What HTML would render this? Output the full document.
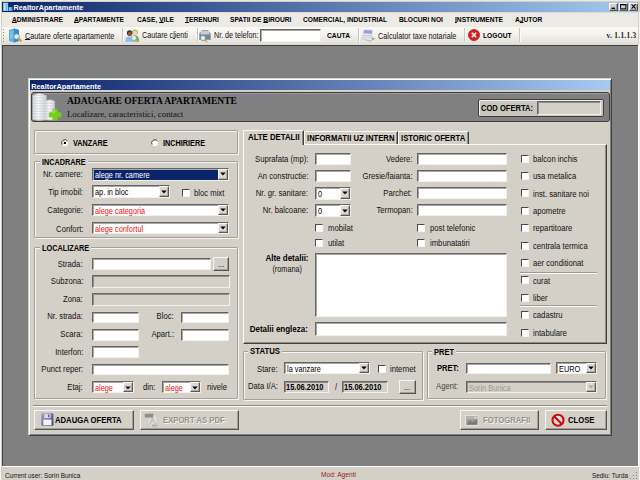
<!DOCTYPE html><html><head><meta charset="utf-8"><style>
html,body{margin:0;padding:0;width:640px;height:480px;overflow:hidden;background:#d4d0c8;}
.a{position:absolute;}
.t{position:absolute;white-space:nowrap;}
</style></head><body>
<div class="a" style="left:0px;top:0px;width:640px;height:480px;background:#d4d0c8;"></div>
<div class="a" style="left:0px;top:0px;width:640px;height:1px;background:#e9e7e2;"></div>
<div class="a" style="left:2px;top:2px;width:636px;height:10px;background:linear-gradient(90deg,#0a246a 0%,#a6caf0 100%);"></div>
<svg class="a" style="left:3px;top:2px" width="10" height="10"><rect x="0.1" y="0.7" width="5" height="8.2" fill="#93d2f2"/><rect x="1.2" y="1.5" width="0.8" height="7" fill="#c8ecfb"/><rect x="3.2" y="1.5" width="0.8" height="7" fill="#5fb2de"/><rect x="5.5" y="5" width="4" height="4" fill="#4b9fcf"/><rect x="6.2" y="5.6" width="1.5" height="3" fill="#8fcbe9"/></svg>
<div class="t" style="left:13.50px;top:3.92px;font:bold 7.30px/7.30px 'Liberation Sans', sans-serif;color:#fff;">RealtorApartamente</div>
<div class="a" style="left:609px;top:3px;width:9px;height:8px;background:#d4d0c8;border-top:1px solid #f6f5f2;border-left:1px solid #f6f5f2;border-right:1px solid #555452;border-bottom:1px solid #555452;box-sizing:border-box;box-shadow:inset -1px -1px 0 rgba(128,126,122,0.6);"></div>
<div class="a" style="left:619px;top:3px;width:9px;height:8px;background:#d4d0c8;border-top:1px solid #f6f5f2;border-left:1px solid #f6f5f2;border-right:1px solid #555452;border-bottom:1px solid #555452;box-sizing:border-box;box-shadow:inset -1px -1px 0 rgba(128,126,122,0.6);"></div>
<div class="a" style="left:629px;top:3px;width:9px;height:8px;background:#d4d0c8;border-top:1px solid #f6f5f2;border-left:1px solid #f6f5f2;border-right:1px solid #555452;border-bottom:1px solid #555452;box-sizing:border-box;box-shadow:inset -1px -1px 0 rgba(128,126,122,0.6);"></div>
<svg class="a" style="left:609px;top:3px" width="30" height="8"><rect x="2.5" y="4.6" width="3.5" height="1.4" fill="#000"/><rect x="11.6" y="1.4" width="5.2" height="4.4" fill="none" stroke="#000" stroke-width="0.9"/><rect x="11.2" y="1" width="6" height="1.3" fill="#000"/><path d="M22.6 1.4L26.6 5.6M26.6 1.4L22.6 5.6" stroke="#000" stroke-width="1.1"/></svg>
<div class="a" style="left:2px;top:12px;width:636px;height:14px;background:#eceae5;"></div>
<div class="a" style="left:2px;top:12px;width:636px;height:1px;background:#dedcd6;"></div>
<div class="t" style="left:11.70px;top:16.23px;font:bold 7.65px/7.65px 'Liberation Sans', sans-serif;color:#000;transform:scaleX(0.8696);transform-origin:left 50%;text-decoration-thickness:0.5px;text-underline-offset:0.4px;"><u>A</u>DMINISTRARE</div>
<div class="t" style="left:74.00px;top:16.23px;font:bold 7.65px/7.65px 'Liberation Sans', sans-serif;color:#000;transform:scaleX(0.8696);transform-origin:left 50%;text-decoration-thickness:0.5px;text-underline-offset:0.4px;"><u>A</u>PARTAMENTE</div>
<div class="t" style="left:136.50px;top:16.23px;font:bold 7.65px/7.65px 'Liberation Sans', sans-serif;color:#000;transform:scaleX(0.8696);transform-origin:left 50%;text-decoration-thickness:0.5px;text-underline-offset:0.4px;">CASE, <u>V</u>ILE</div>
<div class="t" style="left:185.00px;top:16.23px;font:bold 7.65px/7.65px 'Liberation Sans', sans-serif;color:#000;transform:scaleX(0.8696);transform-origin:left 50%;text-decoration-thickness:0.5px;text-underline-offset:0.4px;"><u>T</u>ERENURI</div>
<div class="t" style="left:229.80px;top:16.23px;font:bold 7.65px/7.65px 'Liberation Sans', sans-serif;color:#000;transform:scaleX(0.8696);transform-origin:left 50%;text-decoration-thickness:0.5px;text-underline-offset:0.4px;">SPATII DE <u>B</u>IROURI</div>
<div class="t" style="left:303.20px;top:16.23px;font:bold 7.65px/7.65px 'Liberation Sans', sans-serif;color:#000;transform:scaleX(0.8696);transform-origin:left 50%;text-decoration-thickness:0.5px;text-underline-offset:0.4px;">COMERCIAL, INDUSTRIAL</div>
<div class="t" style="left:399.30px;top:16.23px;font:bold 7.65px/7.65px 'Liberation Sans', sans-serif;color:#000;transform:scaleX(0.8696);transform-origin:left 50%;text-decoration-thickness:0.5px;text-underline-offset:0.4px;">BLOCURI NOI</div>
<div class="t" style="left:455.00px;top:16.23px;font:bold 7.65px/7.65px 'Liberation Sans', sans-serif;color:#000;transform:scaleX(0.8696);transform-origin:left 50%;text-decoration-thickness:0.5px;text-underline-offset:0.4px;"><u>I</u>NSTRUMENTE</div>
<div class="t" style="left:514.50px;top:16.23px;font:bold 7.65px/7.65px 'Liberation Sans', sans-serif;color:#000;transform:scaleX(0.8696);transform-origin:left 50%;text-decoration-thickness:0.5px;text-underline-offset:0.4px;">A<u>J</u>UTOR</div>
<div class="a" style="left:2px;top:26px;width:636px;height:19px;background:linear-gradient(180deg,#fbfaf8 0%,#f3f2ee 45%,#e6e3dc 85%,#dcd9d1 100%);"></div>
<div class="a" style="left:2px;top:26px;width:636px;height:1px;background:#ebe9e4;"></div>
<div class="a" style="left:2px;top:45px;width:636px;height:1px;background:#404040;"></div>
<div class="a" style="left:3px;top:29px;width:1px;height:1px;background:#8d8a84;"></div>
<div class="a" style="left:3px;top:32px;width:1px;height:1px;background:#8d8a84;"></div>
<div class="a" style="left:3px;top:35px;width:1px;height:1px;background:#8d8a84;"></div>
<div class="a" style="left:3px;top:38px;width:1px;height:1px;background:#8d8a84;"></div>
<div class="a" style="left:3px;top:41px;width:1px;height:1px;background:#8d8a84;"></div>
<div class="a" style="left:122px;top:28px;width:1px;height:14px;background:#c9c6bf;"></div>
<div class="a" style="left:123px;top:28px;width:1px;height:14px;background:#fbfaf8;"></div>
<div class="a" style="left:196.7px;top:28px;width:1.0px;height:14px;background:#c9c6bf;"></div>
<div class="a" style="left:197.7px;top:28px;width:1.0px;height:14px;background:#fbfaf8;"></div>
<div class="a" style="left:357.6px;top:28px;width:1.0px;height:14px;background:#c9c6bf;"></div>
<div class="a" style="left:358.6px;top:28px;width:1.0px;height:14px;background:#fbfaf8;"></div>
<div class="a" style="left:464px;top:28px;width:1px;height:14px;background:#c9c6bf;"></div>
<div class="a" style="left:465px;top:28px;width:1px;height:14px;background:#fbfaf8;"></div>
<div class="a" style="left:519px;top:28px;width:1px;height:14px;background:#c9c6bf;"></div>
<div class="a" style="left:520px;top:28px;width:1px;height:14px;background:#fbfaf8;"></div>
<svg class="a" style="left:8px;top:28px" width="15" height="15"><path d="M1 2L6 0.5L11 2V13L6 14.5L1 13Z" fill="#5fb0e0"/><path d="M6 0.5L11 2V13L6 14.5Z" fill="#2f8fcc"/><path d="M2 4H5M2 6H5M2 8H5M2 10H5" stroke="#b9e0f6" stroke-width="0.7"/><circle cx="8.5" cy="8.5" r="2.8" fill="#dff1fb" stroke="#6f8da0" stroke-width="0.9"/><path d="M10.5 10.5L13.5 13.5" stroke="#e39a2a" stroke-width="1.8"/></svg>
<div class="t" style="left:24.80px;top:31.61px;font:normal 8.37px/8.37px 'Liberation Sans', sans-serif;color:#111;transform:scaleX(0.8696);transform-origin:left 50%;text-decoration-thickness:0.5px;text-underline-offset:0.4px;"><u>C</u>autare oferte apartamente</div>
<svg class="a" style="left:125px;top:28px" width="15" height="15"><circle cx="10" cy="4.3" r="2.9" fill="#b9b46a"/><circle cx="10" cy="5" r="2.2" fill="#f0d2b4"/><path d="M6.8 13.5C6.8 9 8 7.6 10.2 7.6S14 9 14 13.5Z" fill="#6fae4a"/><circle cx="4.6" cy="5" r="2.7" fill="#2c2c2c"/><circle cx="4.8" cy="5.8" r="2.2" fill="#8a5a32"/><path d="M0.3 13.8C0.3 9.6 2 8.4 4.8 8.4S9.6 9.6 9.6 13.8Z" fill="#8dbde6"/><circle cx="9" cy="10" r="2.4" fill="#e6f4fc" stroke="#7ca7c8" stroke-width="0.7"/><path d="M10.6 11.8L12.8 14" stroke="#f0a030" stroke-width="1.6"/></svg>
<div class="t" style="left:142.40px;top:31.69px;font:normal 8.28px/8.28px 'Liberation Sans', sans-serif;color:#111;transform:scaleX(0.8696);transform-origin:left 50%;text-decoration-thickness:0.5px;text-underline-offset:0.4px;">Cautare c<u>l</u>ienti</div>
<svg class="a" style="left:198px;top:28px" width="14" height="15"><path d="M1 6L4 2H10L13 6V12H1Z" fill="#9aa3ab"/><rect x="3" y="3" width="8" height="3" fill="#c8d0d6"/><rect x="2" y="7" width="10" height="4" fill="#7d868e"/><circle cx="5" cy="10" r="2.6" fill="#dff1fb" stroke="#5d88a8" stroke-width="0.8"/><path d="M6.8 11.8L9 14" stroke="#e39a2a" stroke-width="1.5"/></svg>
<div class="t" style="left:213.50px;top:32.04px;font:normal 8.22px/8.22px 'Liberation Sans', sans-serif;color:#111;transform:scaleX(0.8696);transform-origin:left 50%;">Nr. de telefon:</div>
<div class="a" style="left:260px;top:29px;width:61px;height:13px;background:#fff;border-top:1px solid #676561;border-left:1px solid #676561;border-right:1px solid #f2f1ee;border-bottom:1px solid #f2f1ee;box-sizing:border-box;box-shadow:inset 1px 1px 0 rgba(60,60,60,0.45);"></div>
<div class="t" style="left:327.30px;top:32.33px;font:bold 7.76px/7.76px 'Liberation Sans', sans-serif;color:#000;transform:scaleX(0.8696);transform-origin:left 50%;">CAUTA</div>
<svg class="a" style="left:357px;top:25px" width="20" height="20"><path d="M4 13.5L13.5 16.8L18.5 13.5L14 12Z" fill="#a9aaad"/><path d="M7 5L15.2 5.4L14.6 15.8L5.2 14Z" fill="#e6e8ec" stroke="#c4c7cc" stroke-width="0.5"/><path d="M7 5L15.2 5.4L15 8.8L6.6 8.3Z" fill="#8d9fe0"/><path d="M6.2 10.5H14.6M5.8 12.3H14.5" stroke="#b9bcc2" stroke-width="0.6"/></svg>
<div class="t" style="left:378.00px;top:31.61px;font:normal 8.37px/8.37px 'Liberation Sans', sans-serif;color:#111;transform:scaleX(0.8696);transform-origin:left 50%;">Calculator taxe notariale</div>
<svg class="a" style="left:468px;top:29px" width="12" height="12"><circle cx="6" cy="6" r="5.6" fill="#d81e1e"/><circle cx="6" cy="6" r="5.6" fill="none" stroke="#9d1010" stroke-width="0.6"/><path d="M3.8 3.8L8.2 8.2M8.2 3.8L3.8 8.2" stroke="#fff" stroke-width="1.6"/></svg>
<div class="t" style="left:483.00px;top:32.38px;font:bold 7.70px/7.70px 'Liberation Sans', sans-serif;color:#000;transform:scaleX(0.8696);transform-origin:left 50%;">LOGOUT</div>
<div class="t" style="right:3.50px;top:32.22px;font:bold 7.30px/7.30px 'Liberation Serif', serif;color:#1a1a1a;letter-spacing:0.3px;">v. 1.1.1.3</div>
<div class="a" style="left:2px;top:46px;width:636px;height:420px;background:#808080;"></div>
<div class="a" style="left:2px;top:466px;width:637px;height:1px;background:#ffffff;"></div>
<div class="a" style="left:638px;top:45px;width:1px;height:422px;background:#ffffff;"></div>
<div class="a" style="left:2px;top:45px;width:1px;height:421px;background:#404040;"></div>
<div class="a" style="left:0px;top:0px;width:1px;height:480px;background:#f8f6f2;"></div>
<div class="a" style="left:639px;top:12px;width:1px;height:468px;background:#f4f2ee;"></div>
<div class="t" style="left:4.70px;top:471.58px;font:normal 7.35px/7.35px 'Liberation Sans', sans-serif;color:#111;transform:scaleX(0.8696);transform-origin:left 50%;">Current user: Sorin Bunica</div>
<div class="t" style="left:321.00px;top:471.35px;font:normal 7.62px/7.62px 'Liberation Sans', sans-serif;color:#9b1c1c;transform:scaleX(0.8696);transform-origin:left 50%;">Mod: Agenti</div>
<div class="t" style="left:592.00px;top:471.62px;font:normal 7.30px/7.30px 'Liberation Sans', sans-serif;color:#111;transform:scaleX(0.8696);transform-origin:left 50%;">Sediu: Turda</div>
<div class="a" style="left:636px;top:472px;width:1px;height:1px;background:#8d8a84;"></div>
<div class="a" style="left:633px;top:475px;width:1px;height:1px;background:#8d8a84;"></div>
<div class="a" style="left:636px;top:475px;width:1px;height:1px;background:#8d8a84;"></div>
<div class="a" style="left:630px;top:478px;width:1px;height:1px;background:#8d8a84;"></div>
<div class="a" style="left:633px;top:478px;width:1px;height:1px;background:#8d8a84;"></div>
<div class="a" style="left:636px;top:478px;width:1px;height:1px;background:#8d8a84;"></div>
<div class="a" style="left:28px;top:78px;width:584px;height:358px;background:#d4d0c8;border-top:1px solid #d4d0c8;border-left:1px solid #d4d0c8;border-right:1px solid #404040;border-bottom:1px solid #404040;box-sizing:border-box;box-shadow:inset 1px 1px 0 #fff, inset -1px -1px 0 #808080;"></div>
<div class="a" style="left:30px;top:80px;width:580px;height:10px;background:linear-gradient(90deg,#0a246a 0%,#a6caf0 100%);"></div>
<div class="t" style="left:31.30px;top:82.72px;font:bold 7.30px/7.30px 'Liberation Sans', sans-serif;color:#fff;">RealtorApartamente</div>
<div class="a" style="left:30.5px;top:92px;width:579.0px;height:29.5px;background:#808080;border:1px solid #3f3f3f;border-radius:3px;box-sizing:border-box;box-shadow:inset 1px 1px 0 #9a9a9a;"></div>
<svg class="a" style="left:32px;top:92px" width="30" height="30">
<defs><linearGradient id="bg1" x1="0" x2="1" y1="0" y2="0"><stop offset="0" stop-color="#d8dbe0"/><stop offset="0.4" stop-color="#ffffff"/><stop offset="1" stop-color="#cfd3d9"/></linearGradient>
<pattern id="ln" width="3" height="1.6" patternUnits="userSpaceOnUse"><rect width="3" height="0.6" fill="#a9aeb6" opacity="0.55"/></pattern></defs>
<path d="M0.8 3.5Q7.5 -0.5 14.5 3.5V27.5Q7.5 29.5 0.8 27.5Z" fill="url(#bg1)"/>
<path d="M0.8 3.5Q7.5 -0.5 14.5 3.5V27.5Q7.5 29.5 0.8 27.5Z" fill="url(#ln)"/>
<path d="M13.2 9.2Q18 6.5 22.8 9.2V27.5Q18 28.8 13.2 27.5Z" fill="url(#bg1)"/>
<path d="M13.2 9.2Q18 6.5 22.8 9.2V27.5Q18 28.8 13.2 27.5Z" fill="url(#ln)"/>
<rect x="20.6" y="16.8" width="5" height="11.8" rx="0.6" fill="#78cc1c"/><rect x="16.8" y="20.2" width="12.4" height="5" rx="0.6" fill="#78cc1c"/>
<rect x="21.2" y="17.4" width="2" height="4" fill="#a8e860" opacity="0.7"/>
</svg>
<div class="t" style="left:67.00px;top:97.06px;font:bold 9.50px/9.50px 'Liberation Serif', serif;color:#000;">ADAUGARE OFERTA APARTAMENTE</div>
<div class="t" style="left:67.00px;top:109.65px;font:normal 8.80px/8.80px 'Liberation Serif', serif;color:#111;">Localizare, caracteristici, contact</div>
<div class="a" style="left:477.5px;top:98.5px;width:126.0px;height:18.0px;background:#c9c6bf;border:1px solid #3f3f3f;border-radius:2px;box-sizing:border-box;box-shadow:inset 1px 1px 0 #f0efeb;"></div>
<div class="t" style="left:481.00px;top:104.43px;font:bold 8.71px/8.71px 'Liberation Sans', sans-serif;color:#000;transform:scaleX(0.8696);transform-origin:left 50%;">COD OFERTA:</div>
<div class="a" style="left:537px;top:101px;width:64px;height:13.5px;background:#d4d0c8;border-top:1px solid #676561;border-left:1px solid #676561;border-right:1px solid #f2f1ee;border-bottom:1px solid #f2f1ee;box-sizing:border-box;box-shadow:inset 1px 1px 0 rgba(60,60,60,0.45);"></div>
<div class="a" style="left:34px;top:130px;width:204px;height:24px;border:1px solid #a3a09a;border-radius:1px;box-sizing:border-box;box-shadow:inset 1px 1px 0 #f6f5f2, 1px 1px 0 #f6f5f2;"></div>
<svg class="a" style="left:60.5px;top:138.5px" width="8" height="8"><circle cx="3.9" cy="3.9" r="3.1" fill="#fff"/><path d="M1.2 5.6A3.1 3.1 0 0 1 6.6 2.2" fill="none" stroke="#3a3a3a" stroke-width="1"/><circle cx="3.9" cy="3.9" r="1.2" fill="#000"/></svg>
<div class="t" style="left:72.50px;top:139.19px;font:bold 8.39px/8.39px 'Liberation Sans', sans-serif;color:#000;transform:scaleX(0.8696);transform-origin:left 50%;">VANZARE</div>
<svg class="a" style="left:150.5px;top:138.5px" width="8" height="8"><circle cx="3.9" cy="3.9" r="3.1" fill="#fff"/><path d="M1.2 5.6A3.1 3.1 0 0 1 6.6 2.2" fill="none" stroke="#3a3a3a" stroke-width="1"/></svg>
<div class="t" style="left:162.80px;top:139.19px;font:bold 8.39px/8.39px 'Liberation Sans', sans-serif;color:#000;transform:scaleX(0.8696);transform-origin:left 50%;">INCHIRIERE</div>
<div class="a" style="left:34px;top:161px;width:204px;height:77px;border:1px solid #a3a09a;border-radius:1px;box-sizing:border-box;box-shadow:inset 1px 1px 0 #f6f5f2, 1px 1px 0 #f6f5f2;"></div>
<div class="a" style="left:39.7px;top:158px;width:48.0px;height:6px;background:#d4d0c8;"></div>
<div class="t" style="left:41.70px;top:158.19px;font:bold 8.39px/8.39px 'Liberation Sans', sans-serif;color:#000;transform:scaleX(0.8696);transform-origin:left 50%;">INCADRARE</div>
<div class="t" style="right:557.00px;top:170.00px;font:normal 8.85px/8.85px 'Liberation Sans', sans-serif;color:#111;transform:scaleX(0.8696);transform-origin:right 50%;">Nr. camere:</div>
<div class="a" style="left:92px;top:168px;width:136.5px;height:12.5px;background:#fff;border-top:1px solid #676561;border-left:1px solid #676561;border-right:1px solid #f2f1ee;border-bottom:1px solid #f2f1ee;box-sizing:border-box;box-shadow:inset 1px 1px 0 rgba(60,60,60,0.45);"></div>
<div class="a" style="left:94px;top:170px;width:123.5px;height:9.5px;background:#0a246a;"></div>
<div class="a" style="left:217.5px;top:169px;width:10.0px;height:10.5px;background:#dcd9d3;border-top:1px solid #fbfaf8;border-left:1px solid #fbfaf8;border-right:1px solid #5a5955;border-bottom:1px solid #5a5955;box-sizing:border-box;box-shadow:inset -1px -1px 0 rgba(128,126,122,0.5);"></div>
<svg class="a" style="left:219.5px;top:172.4px" width="6" height="4"><path d="M0.3 0.4H5.7L3 3.4Z" fill="#000"/></svg>
<div class="t" style="left:94.70px;top:170.64px;font:normal 8.45px/8.45px 'Liberation Sans', sans-serif;color:#fff;transform:scaleX(0.8696);transform-origin:left 50%;">alege nr. camere</div>
<div class="t" style="right:557.00px;top:187.50px;font:normal 8.85px/8.85px 'Liberation Sans', sans-serif;color:#111;transform:scaleX(0.8696);transform-origin:right 50%;">Tip imobil:</div>
<div class="a" style="left:92px;top:185px;width:78px;height:13px;background:#fff;border-top:1px solid #676561;border-left:1px solid #676561;border-right:1px solid #f2f1ee;border-bottom:1px solid #f2f1ee;box-sizing:border-box;box-shadow:inset 1px 1px 0 rgba(60,60,60,0.45);"></div>
<div class="a" style="left:159px;top:186px;width:10px;height:11px;background:#dcd9d3;border-top:1px solid #fbfaf8;border-left:1px solid #fbfaf8;border-right:1px solid #5a5955;border-bottom:1px solid #5a5955;box-sizing:border-box;box-shadow:inset -1px -1px 0 rgba(128,126,122,0.5);"></div>
<svg class="a" style="left:161.0px;top:189.7px" width="6" height="4"><path d="M0.3 0.4H5.7L3 3.4Z" fill="#000"/></svg>
<div class="t" style="left:94.70px;top:187.64px;font:normal 8.45px/8.45px 'Liberation Sans', sans-serif;color:#000;transform:scaleX(0.8696);transform-origin:left 50%;">ap. in bloc</div>
<div class="a" style="left:181.7px;top:188.7px;width:8.0px;height:8.0px;background:#fff;border-top:1px solid #4a4a4a;border-left:1px solid #4a4a4a;border-right:1px solid #f6f5f2;border-bottom:1px solid #f6f5f2;box-sizing:border-box;"></div>
<div class="t" style="left:193.70px;top:189.00px;font:normal 8.85px/8.85px 'Liberation Sans', sans-serif;color:#111;transform:scaleX(0.8696);transform-origin:left 50%;">bloc mixt</div>
<div class="t" style="right:557.00px;top:206.00px;font:normal 8.85px/8.85px 'Liberation Sans', sans-serif;color:#111;transform:scaleX(0.8696);transform-origin:right 50%;">Categorie:</div>
<div class="a" style="left:92px;top:204px;width:136.5px;height:12px;background:#fff;border-top:1px solid #676561;border-left:1px solid #676561;border-right:1px solid #f2f1ee;border-bottom:1px solid #f2f1ee;box-sizing:border-box;box-shadow:inset 1px 1px 0 rgba(60,60,60,0.45);"></div>
<div class="a" style="left:217.5px;top:205px;width:10.0px;height:10px;background:#dcd9d3;border-top:1px solid #fbfaf8;border-left:1px solid #fbfaf8;border-right:1px solid #5a5955;border-bottom:1px solid #5a5955;box-sizing:border-box;box-shadow:inset -1px -1px 0 rgba(128,126,122,0.5);"></div>
<svg class="a" style="left:219.5px;top:208.2px" width="6" height="4"><path d="M0.3 0.4H5.7L3 3.4Z" fill="#000"/></svg>
<div class="t" style="left:94.70px;top:206.64px;font:normal 8.45px/8.45px 'Liberation Sans', sans-serif;color:#f01010;transform:scaleX(0.8696);transform-origin:left 50%;">alege categoria</div>
<div class="t" style="right:557.00px;top:224.50px;font:normal 8.85px/8.85px 'Liberation Sans', sans-serif;color:#111;transform:scaleX(0.8696);transform-origin:right 50%;">Confort:</div>
<div class="a" style="left:92px;top:222px;width:136.5px;height:12px;background:#fff;border-top:1px solid #676561;border-left:1px solid #676561;border-right:1px solid #f2f1ee;border-bottom:1px solid #f2f1ee;box-sizing:border-box;box-shadow:inset 1px 1px 0 rgba(60,60,60,0.45);"></div>
<div class="a" style="left:217.5px;top:223px;width:10.0px;height:10px;background:#dcd9d3;border-top:1px solid #fbfaf8;border-left:1px solid #fbfaf8;border-right:1px solid #5a5955;border-bottom:1px solid #5a5955;box-sizing:border-box;box-shadow:inset -1px -1px 0 rgba(128,126,122,0.5);"></div>
<svg class="a" style="left:219.5px;top:226.2px" width="6" height="4"><path d="M0.3 0.4H5.7L3 3.4Z" fill="#000"/></svg>
<div class="t" style="left:94.70px;top:224.64px;font:normal 8.45px/8.45px 'Liberation Sans', sans-serif;color:#f01010;transform:scaleX(0.8696);transform-origin:left 50%;">alege confortul</div>
<div class="a" style="left:34px;top:247px;width:204px;height:152px;border:1px solid #a3a09a;border-radius:1px;box-sizing:border-box;box-shadow:inset 1px 1px 0 #f6f5f2, 1px 1px 0 #f6f5f2;"></div>
<div class="a" style="left:39.5px;top:244px;width:51.3px;height:6px;background:#d4d0c8;"></div>
<div class="t" style="left:41.50px;top:243.96px;font:bold 8.43px/8.43px 'Liberation Sans', sans-serif;color:#000;transform:scaleX(0.8696);transform-origin:left 50%;">LOCALIZARE</div>
<div class="t" style="right:557.00px;top:259.60px;font:normal 8.85px/8.85px 'Liberation Sans', sans-serif;color:#111;transform:scaleX(0.8696);transform-origin:right 50%;">Strada:</div>
<div class="a" style="left:92px;top:258px;width:118.5px;height:11.5px;background:#fff;border-top:1px solid #676561;border-left:1px solid #676561;border-right:1px solid #f2f1ee;border-bottom:1px solid #f2f1ee;box-sizing:border-box;box-shadow:inset 1px 1px 0 rgba(60,60,60,0.45);"></div>
<div class="a" style="left:213px;top:257px;width:16px;height:14px;background:#d4d0c8;border-top:1px solid #f6f5f2;border-left:1px solid #f6f5f2;border-right:1px solid #555452;border-bottom:1px solid #555452;box-sizing:border-box;box-shadow:inset -1px -1px 0 rgba(128,126,122,0.6);"></div>
<div class="t" style="left:217.50px;top:260.10px;font:normal 8.74px/8.74px 'Liberation Sans', sans-serif;color:#222;transform:scaleX(0.8696);transform-origin:left 50%;">...</div>
<div class="t" style="right:557.00px;top:277.20px;font:normal 8.85px/8.85px 'Liberation Sans', sans-serif;color:#111;transform:scaleX(0.8696);transform-origin:right 50%;">Subzona:</div>
<div class="a" style="left:92px;top:275px;width:137.5px;height:12.5px;background:#d4d0c8;border-top:1px solid #676561;border-left:1px solid #676561;border-right:1px solid #f2f1ee;border-bottom:1px solid #f2f1ee;box-sizing:border-box;box-shadow:inset 1px 1px 0 rgba(60,60,60,0.45);"></div>
<div class="t" style="right:557.00px;top:294.80px;font:normal 8.85px/8.85px 'Liberation Sans', sans-serif;color:#111;transform:scaleX(0.8696);transform-origin:right 50%;">Zona:</div>
<div class="a" style="left:92px;top:293px;width:137.5px;height:12.5px;background:#d4d0c8;border-top:1px solid #676561;border-left:1px solid #676561;border-right:1px solid #f2f1ee;border-bottom:1px solid #f2f1ee;box-sizing:border-box;box-shadow:inset 1px 1px 0 rgba(60,60,60,0.45);"></div>
<div class="t" style="right:557.00px;top:312.40px;font:normal 8.85px/8.85px 'Liberation Sans', sans-serif;color:#111;transform:scaleX(0.8696);transform-origin:right 50%;">Nr. strada:</div>
<div class="a" style="left:92px;top:311.5px;width:47px;height:11.5px;background:#fff;border-top:1px solid #676561;border-left:1px solid #676561;border-right:1px solid #f2f1ee;border-bottom:1px solid #f2f1ee;box-sizing:border-box;box-shadow:inset 1px 1px 0 rgba(60,60,60,0.45);"></div>
<div class="t" style="right:466.00px;top:312.40px;font:normal 8.85px/8.85px 'Liberation Sans', sans-serif;color:#111;transform:scaleX(0.8696);transform-origin:right 50%;">Bloc:</div>
<div class="a" style="left:181px;top:311.5px;width:47.5px;height:11.5px;background:#fff;border-top:1px solid #676561;border-left:1px solid #676561;border-right:1px solid #f2f1ee;border-bottom:1px solid #f2f1ee;box-sizing:border-box;box-shadow:inset 1px 1px 0 rgba(60,60,60,0.45);"></div>
<div class="t" style="right:557.00px;top:330.00px;font:normal 8.85px/8.85px 'Liberation Sans', sans-serif;color:#111;transform:scaleX(0.8696);transform-origin:right 50%;">Scara:</div>
<div class="a" style="left:92px;top:329px;width:47px;height:11.5px;background:#fff;border-top:1px solid #676561;border-left:1px solid #676561;border-right:1px solid #f2f1ee;border-bottom:1px solid #f2f1ee;box-sizing:border-box;box-shadow:inset 1px 1px 0 rgba(60,60,60,0.45);"></div>
<div class="t" style="right:466.00px;top:330.00px;font:normal 8.85px/8.85px 'Liberation Sans', sans-serif;color:#111;transform:scaleX(0.8696);transform-origin:right 50%;">Apart.:</div>
<div class="a" style="left:181px;top:329px;width:47.5px;height:11.5px;background:#fff;border-top:1px solid #676561;border-left:1px solid #676561;border-right:1px solid #f2f1ee;border-bottom:1px solid #f2f1ee;box-sizing:border-box;box-shadow:inset 1px 1px 0 rgba(60,60,60,0.45);"></div>
<div class="t" style="right:557.00px;top:347.60px;font:normal 8.85px/8.85px 'Liberation Sans', sans-serif;color:#111;transform:scaleX(0.8696);transform-origin:right 50%;">Interfon:</div>
<div class="a" style="left:92px;top:346px;width:47px;height:11.5px;background:#fff;border-top:1px solid #676561;border-left:1px solid #676561;border-right:1px solid #f2f1ee;border-bottom:1px solid #f2f1ee;box-sizing:border-box;box-shadow:inset 1px 1px 0 rgba(60,60,60,0.45);"></div>
<div class="t" style="right:557.00px;top:365.20px;font:normal 8.85px/8.85px 'Liberation Sans', sans-serif;color:#111;transform:scaleX(0.8696);transform-origin:right 50%;">Punct reper:</div>
<div class="a" style="left:92px;top:364.3px;width:137px;height:11.0px;background:#fff;border-top:1px solid #676561;border-left:1px solid #676561;border-right:1px solid #f2f1ee;border-bottom:1px solid #f2f1ee;box-sizing:border-box;box-shadow:inset 1px 1px 0 rgba(60,60,60,0.45);"></div>
<div class="t" style="right:557.00px;top:382.80px;font:normal 8.85px/8.85px 'Liberation Sans', sans-serif;color:#111;transform:scaleX(0.8696);transform-origin:right 50%;">Etaj:</div>
<div class="a" style="left:92px;top:381.3px;width:42px;height:12.0px;background:#fff;border-top:1px solid #676561;border-left:1px solid #676561;border-right:1px solid #f2f1ee;border-bottom:1px solid #f2f1ee;box-sizing:border-box;box-shadow:inset 1px 1px 0 rgba(60,60,60,0.45);"></div>
<div class="a" style="left:123px;top:382.3px;width:10px;height:10.0px;background:#dcd9d3;border-top:1px solid #fbfaf8;border-left:1px solid #fbfaf8;border-right:1px solid #5a5955;border-bottom:1px solid #5a5955;box-sizing:border-box;box-shadow:inset -1px -1px 0 rgba(128,126,122,0.5);"></div>
<svg class="a" style="left:125.0px;top:385.5px" width="6" height="4"><path d="M0.3 0.4H5.7L3 3.4Z" fill="#000"/></svg>
<div class="t" style="left:94.70px;top:383.94px;font:normal 8.45px/8.45px 'Liberation Sans', sans-serif;color:#f01010;transform:scaleX(0.8696);transform-origin:left 50%;">alege</div>
<div class="t" style="left:142.70px;top:382.80px;font:normal 8.85px/8.85px 'Liberation Sans', sans-serif;color:#111;transform:scaleX(0.8696);transform-origin:left 50%;">din:</div>
<div class="a" style="left:162.3px;top:381.3px;width:38.39999999999998px;height:12.0px;background:#fff;border-top:1px solid #676561;border-left:1px solid #676561;border-right:1px solid #f2f1ee;border-bottom:1px solid #f2f1ee;box-sizing:border-box;box-shadow:inset 1px 1px 0 rgba(60,60,60,0.45);"></div>
<div class="a" style="left:189.7px;top:382.3px;width:10.0px;height:10.0px;background:#dcd9d3;border-top:1px solid #fbfaf8;border-left:1px solid #fbfaf8;border-right:1px solid #5a5955;border-bottom:1px solid #5a5955;box-sizing:border-box;box-shadow:inset -1px -1px 0 rgba(128,126,122,0.5);"></div>
<svg class="a" style="left:191.7px;top:385.5px" width="6" height="4"><path d="M0.3 0.4H5.7L3 3.4Z" fill="#000"/></svg>
<div class="t" style="left:165.00px;top:383.94px;font:normal 8.45px/8.45px 'Liberation Sans', sans-serif;color:#f01010;transform:scaleX(0.8696);transform-origin:left 50%;">alege</div>
<div class="t" style="left:206.70px;top:382.80px;font:normal 8.85px/8.85px 'Liberation Sans', sans-serif;color:#111;transform:scaleX(0.8696);transform-origin:left 50%;">nivele</div>
<div class="a" style="left:243px;top:143.5px;width:363.5px;height:200.3px;border-top:1px solid #fbfaf8;border-left:1px solid #fbfaf8;border-right:1px solid #404040;border-bottom:1px solid #404040;box-sizing:border-box;box-shadow:inset -1px -1px 0 #8f8c86;"></div>
<div class="a" style="left:303.5px;top:131.3px;width:94.0px;height:12.299999999999983px;background:#d4d0c8;border-top:1px solid #fbfaf8;border-left:1px solid #fbfaf8;border-right:1px solid #404040;box-sizing:border-box;box-shadow:inset -1px 0 0 #8f8c86;"></div>
<div class="a" style="left:397.8px;top:131.3px;width:71.69999999999999px;height:12.299999999999983px;background:#d4d0c8;border-top:1px solid #fbfaf8;border-left:1px solid #fbfaf8;border-right:1px solid #404040;box-sizing:border-box;box-shadow:inset -1px 0 0 #8f8c86;"></div>
<div class="t" style="left:306.60px;top:133.60px;font:bold 8.85px/8.85px 'Liberation Sans', sans-serif;color:#000;transform:scaleX(0.8696);transform-origin:left 50%;">INFORMATII UZ INTERN</div>
<div class="t" style="left:401.20px;top:133.60px;font:bold 8.85px/8.85px 'Liberation Sans', sans-serif;color:#000;transform:scaleX(0.8696);transform-origin:left 50%;">ISTORIC OFERTA</div>
<div class="a" style="left:243px;top:130px;width:61px;height:15px;background:#d4d0c8;border-top:1px solid #fbfaf8;border-left:1px solid #fbfaf8;border-right:1px solid #404040;box-sizing:border-box;box-shadow:inset -1px 0 0 #8f8c86;"></div>
<div class="t" style="left:247.50px;top:132.51px;font:bold 8.97px/8.97px 'Liberation Sans', sans-serif;color:#000;transform:scaleX(0.8696);transform-origin:left 50%;">ALTE DETALII</div>
<div class="t" style="right:331.70px;top:155.00px;font:normal 8.85px/8.85px 'Liberation Sans', sans-serif;color:#111;transform:scaleX(0.8696);transform-origin:right 50%;">Suprafata (mp):</div>
<div class="t" style="right:227.70px;top:155.00px;font:normal 8.85px/8.85px 'Liberation Sans', sans-serif;color:#111;transform:scaleX(0.8696);transform-origin:right 50%;">Vedere:</div>
<div class="a" style="left:315.4px;top:153px;width:35.60000000000002px;height:11.800000000000011px;background:#fff;border-top:1px solid #676561;border-left:1px solid #676561;border-right:1px solid #f2f1ee;border-bottom:1px solid #f2f1ee;box-sizing:border-box;box-shadow:inset 1px 1px 0 rgba(60,60,60,0.45);"></div>
<div class="a" style="left:417.3px;top:153px;width:89.69999999999999px;height:11.800000000000011px;background:#fff;border-top:1px solid #676561;border-left:1px solid #676561;border-right:1px solid #f2f1ee;border-bottom:1px solid #f2f1ee;box-sizing:border-box;box-shadow:inset 1px 1px 0 rgba(60,60,60,0.45);"></div>
<div class="t" style="right:331.70px;top:172.00px;font:normal 8.85px/8.85px 'Liberation Sans', sans-serif;color:#111;transform:scaleX(0.8696);transform-origin:right 50%;">An constructie:</div>
<div class="t" style="right:227.70px;top:172.00px;font:normal 8.85px/8.85px 'Liberation Sans', sans-serif;color:#111;transform:scaleX(0.8696);transform-origin:right 50%;">Gresie/faianta:</div>
<div class="a" style="left:315.4px;top:170px;width:35.60000000000002px;height:11.800000000000011px;background:#fff;border-top:1px solid #676561;border-left:1px solid #676561;border-right:1px solid #f2f1ee;border-bottom:1px solid #f2f1ee;box-sizing:border-box;box-shadow:inset 1px 1px 0 rgba(60,60,60,0.45);"></div>
<div class="a" style="left:417.3px;top:170px;width:89.69999999999999px;height:11.800000000000011px;background:#fff;border-top:1px solid #676561;border-left:1px solid #676561;border-right:1px solid #f2f1ee;border-bottom:1px solid #f2f1ee;box-sizing:border-box;box-shadow:inset 1px 1px 0 rgba(60,60,60,0.45);"></div>
<div class="t" style="right:331.70px;top:189.00px;font:normal 8.85px/8.85px 'Liberation Sans', sans-serif;color:#111;transform:scaleX(0.8696);transform-origin:right 50%;">Nr. gr. sanitare:</div>
<div class="t" style="right:227.70px;top:189.00px;font:normal 8.85px/8.85px 'Liberation Sans', sans-serif;color:#111;transform:scaleX(0.8696);transform-origin:right 50%;">Parchet:</div>
<div class="a" style="left:315px;top:187px;width:36px;height:12.5px;background:#fff;border-top:1px solid #676561;border-left:1px solid #676561;border-right:1px solid #f2f1ee;border-bottom:1px solid #f2f1ee;box-sizing:border-box;box-shadow:inset 1px 1px 0 rgba(60,60,60,0.45);"></div>
<div class="a" style="left:340px;top:188px;width:10px;height:10.5px;background:#dcd9d3;border-top:1px solid #fbfaf8;border-left:1px solid #fbfaf8;border-right:1px solid #5a5955;border-bottom:1px solid #5a5955;box-sizing:border-box;box-shadow:inset -1px -1px 0 rgba(128,126,122,0.5);"></div>
<svg class="a" style="left:342.0px;top:191.4px" width="6" height="4"><path d="M0.3 0.4H5.7L3 3.4Z" fill="#000"/></svg>
<div class="t" style="left:317.70px;top:189.64px;font:normal 8.45px/8.45px 'Liberation Sans', sans-serif;color:#000;transform:scaleX(0.8696);transform-origin:left 50%;">0</div>
<div class="a" style="left:417.3px;top:187px;width:89.69999999999999px;height:11.800000000000011px;background:#fff;border-top:1px solid #676561;border-left:1px solid #676561;border-right:1px solid #f2f1ee;border-bottom:1px solid #f2f1ee;box-sizing:border-box;box-shadow:inset 1px 1px 0 rgba(60,60,60,0.45);"></div>
<div class="t" style="right:331.70px;top:206.30px;font:normal 8.85px/8.85px 'Liberation Sans', sans-serif;color:#111;transform:scaleX(0.8696);transform-origin:right 50%;">Nr. balcoane:</div>
<div class="t" style="right:227.70px;top:206.30px;font:normal 8.85px/8.85px 'Liberation Sans', sans-serif;color:#111;transform:scaleX(0.8696);transform-origin:right 50%;">Termopan:</div>
<div class="a" style="left:315px;top:204px;width:36px;height:13px;background:#fff;border-top:1px solid #676561;border-left:1px solid #676561;border-right:1px solid #f2f1ee;border-bottom:1px solid #f2f1ee;box-sizing:border-box;box-shadow:inset 1px 1px 0 rgba(60,60,60,0.45);"></div>
<div class="a" style="left:340px;top:205px;width:10px;height:11px;background:#dcd9d3;border-top:1px solid #fbfaf8;border-left:1px solid #fbfaf8;border-right:1px solid #5a5955;border-bottom:1px solid #5a5955;box-sizing:border-box;box-shadow:inset -1px -1px 0 rgba(128,126,122,0.5);"></div>
<svg class="a" style="left:342.0px;top:208.7px" width="6" height="4"><path d="M0.3 0.4H5.7L3 3.4Z" fill="#000"/></svg>
<div class="t" style="left:317.70px;top:206.64px;font:normal 8.45px/8.45px 'Liberation Sans', sans-serif;color:#000;transform:scaleX(0.8696);transform-origin:left 50%;">0</div>
<div class="a" style="left:417.3px;top:204.3px;width:89.69999999999999px;height:11.800000000000011px;background:#fff;border-top:1px solid #676561;border-left:1px solid #676561;border-right:1px solid #f2f1ee;border-bottom:1px solid #f2f1ee;box-sizing:border-box;box-shadow:inset 1px 1px 0 rgba(60,60,60,0.45);"></div>
<div class="a" style="left:315.4px;top:224px;width:8.0px;height:8px;background:#fff;border-top:1px solid #4a4a4a;border-left:1px solid #4a4a4a;border-right:1px solid #f6f5f2;border-bottom:1px solid #f6f5f2;box-sizing:border-box;"></div>
<div class="t" style="left:327.80px;top:224.00px;font:normal 8.85px/8.85px 'Liberation Sans', sans-serif;color:#111;transform:scaleX(0.8696);transform-origin:left 50%;">mobilat</div>
<div class="a" style="left:315.4px;top:239px;width:8.0px;height:8px;background:#fff;border-top:1px solid #4a4a4a;border-left:1px solid #4a4a4a;border-right:1px solid #f6f5f2;border-bottom:1px solid #f6f5f2;box-sizing:border-box;"></div>
<div class="t" style="left:327.80px;top:239.00px;font:normal 8.85px/8.85px 'Liberation Sans', sans-serif;color:#111;transform:scaleX(0.8696);transform-origin:left 50%;">utilat</div>
<div class="a" style="left:417.3px;top:224px;width:8.0px;height:8px;background:#fff;border-top:1px solid #4a4a4a;border-left:1px solid #4a4a4a;border-right:1px solid #f6f5f2;border-bottom:1px solid #f6f5f2;box-sizing:border-box;"></div>
<div class="t" style="left:429.80px;top:224.00px;font:normal 8.85px/8.85px 'Liberation Sans', sans-serif;color:#111;transform:scaleX(0.8696);transform-origin:left 50%;">post telefonic</div>
<div class="a" style="left:417.3px;top:239px;width:8.0px;height:8px;background:#fff;border-top:1px solid #4a4a4a;border-left:1px solid #4a4a4a;border-right:1px solid #f6f5f2;border-bottom:1px solid #f6f5f2;box-sizing:border-box;"></div>
<div class="t" style="left:429.80px;top:239.00px;font:normal 8.85px/8.85px 'Liberation Sans', sans-serif;color:#111;transform:scaleX(0.8696);transform-origin:left 50%;">imbunatatiri</div>
<div class="t" style="right:331.70px;top:254.21px;font:bold 9.20px/9.20px 'Liberation Sans', sans-serif;color:#000;transform:scaleX(0.8696);transform-origin:right 50%;">Alte detalii:</div>
<div class="t" style="right:337.70px;top:264.89px;font:normal 8.39px/8.39px 'Liberation Sans', sans-serif;color:#111;transform:scaleX(0.8696);transform-origin:right 50%;">(romana)</div>
<div class="a" style="left:315.4px;top:252.5px;width:191.60000000000002px;height:64.30000000000001px;background:#fff;border-top:1px solid #676561;border-left:1px solid #676561;border-right:1px solid #f2f1ee;border-bottom:1px solid #f2f1ee;box-sizing:border-box;box-shadow:inset 1px 1px 0 rgba(60,60,60,0.45);"></div>
<div class="t" style="right:331.70px;top:324.71px;font:bold 9.20px/9.20px 'Liberation Sans', sans-serif;color:#000;transform:scaleX(0.8696);transform-origin:right 50%;">Detalii engleza:</div>
<div class="a" style="left:315.4px;top:322px;width:191.60000000000002px;height:14.199999999999989px;background:#fff;border-top:1px solid #676561;border-left:1px solid #676561;border-right:1px solid #f2f1ee;border-bottom:1px solid #f2f1ee;box-sizing:border-box;box-shadow:inset 1px 1px 0 rgba(60,60,60,0.45);"></div>
<div class="a" style="left:521px;top:154.6px;width:8px;height:8.0px;background:#fff;border-top:1px solid #4a4a4a;border-left:1px solid #4a4a4a;border-right:1px solid #f6f5f2;border-bottom:1px solid #f6f5f2;box-sizing:border-box;"></div>
<div class="t" style="left:532.80px;top:154.80px;font:normal 8.85px/8.85px 'Liberation Sans', sans-serif;color:#111;transform:scaleX(0.8696);transform-origin:left 50%;">balcon inchis</div>
<div class="a" style="left:521px;top:172px;width:8px;height:8px;background:#fff;border-top:1px solid #4a4a4a;border-left:1px solid #4a4a4a;border-right:1px solid #f6f5f2;border-bottom:1px solid #f6f5f2;box-sizing:border-box;"></div>
<div class="t" style="left:532.80px;top:172.20px;font:normal 8.85px/8.85px 'Liberation Sans', sans-serif;color:#111;transform:scaleX(0.8696);transform-origin:left 50%;">usa metalica</div>
<div class="a" style="left:521px;top:189.3px;width:8px;height:8.0px;background:#fff;border-top:1px solid #4a4a4a;border-left:1px solid #4a4a4a;border-right:1px solid #f6f5f2;border-bottom:1px solid #f6f5f2;box-sizing:border-box;"></div>
<div class="t" style="left:532.80px;top:189.50px;font:normal 8.85px/8.85px 'Liberation Sans', sans-serif;color:#111;transform:scaleX(0.8696);transform-origin:left 50%;">inst. sanitare noi</div>
<div class="a" style="left:521px;top:206.8px;width:8px;height:8.0px;background:#fff;border-top:1px solid #4a4a4a;border-left:1px solid #4a4a4a;border-right:1px solid #f6f5f2;border-bottom:1px solid #f6f5f2;box-sizing:border-box;"></div>
<div class="t" style="left:532.80px;top:207.00px;font:normal 8.85px/8.85px 'Liberation Sans', sans-serif;color:#111;transform:scaleX(0.8696);transform-origin:left 50%;">apometre</div>
<div class="a" style="left:521px;top:224.2px;width:8px;height:8.0px;background:#fff;border-top:1px solid #4a4a4a;border-left:1px solid #4a4a4a;border-right:1px solid #f6f5f2;border-bottom:1px solid #f6f5f2;box-sizing:border-box;"></div>
<div class="t" style="left:532.80px;top:224.40px;font:normal 8.85px/8.85px 'Liberation Sans', sans-serif;color:#111;transform:scaleX(0.8696);transform-origin:left 50%;">repartitoare</div>
<div class="a" style="left:521px;top:241.6px;width:8px;height:8.0px;background:#fff;border-top:1px solid #4a4a4a;border-left:1px solid #4a4a4a;border-right:1px solid #f6f5f2;border-bottom:1px solid #f6f5f2;box-sizing:border-box;"></div>
<div class="t" style="left:532.80px;top:241.80px;font:normal 8.85px/8.85px 'Liberation Sans', sans-serif;color:#111;transform:scaleX(0.8696);transform-origin:left 50%;">centrala termica</div>
<div class="a" style="left:521px;top:259px;width:8px;height:8px;background:#fff;border-top:1px solid #4a4a4a;border-left:1px solid #4a4a4a;border-right:1px solid #f6f5f2;border-bottom:1px solid #f6f5f2;box-sizing:border-box;"></div>
<div class="t" style="left:532.80px;top:259.20px;font:normal 8.85px/8.85px 'Liberation Sans', sans-serif;color:#111;transform:scaleX(0.8696);transform-origin:left 50%;">aer conditionat</div>
<div class="a" style="left:521px;top:276.4px;width:8px;height:8.0px;background:#fff;border-top:1px solid #4a4a4a;border-left:1px solid #4a4a4a;border-right:1px solid #f6f5f2;border-bottom:1px solid #f6f5f2;box-sizing:border-box;"></div>
<div class="t" style="left:532.80px;top:276.60px;font:normal 8.85px/8.85px 'Liberation Sans', sans-serif;color:#111;transform:scaleX(0.8696);transform-origin:left 50%;">curat</div>
<div class="a" style="left:521px;top:293.9px;width:8px;height:8.0px;background:#fff;border-top:1px solid #4a4a4a;border-left:1px solid #4a4a4a;border-right:1px solid #f6f5f2;border-bottom:1px solid #f6f5f2;box-sizing:border-box;"></div>
<div class="t" style="left:532.80px;top:294.10px;font:normal 8.85px/8.85px 'Liberation Sans', sans-serif;color:#111;transform:scaleX(0.8696);transform-origin:left 50%;">liber</div>
<div class="a" style="left:521px;top:311.2px;width:8px;height:8.0px;background:#fff;border-top:1px solid #4a4a4a;border-left:1px solid #4a4a4a;border-right:1px solid #f6f5f2;border-bottom:1px solid #f6f5f2;box-sizing:border-box;"></div>
<div class="t" style="left:532.80px;top:311.40px;font:normal 8.85px/8.85px 'Liberation Sans', sans-serif;color:#111;transform:scaleX(0.8696);transform-origin:left 50%;">cadastru</div>
<div class="a" style="left:521px;top:328.7px;width:8px;height:8.0px;background:#fff;border-top:1px solid #4a4a4a;border-left:1px solid #4a4a4a;border-right:1px solid #f6f5f2;border-bottom:1px solid #f6f5f2;box-sizing:border-box;"></div>
<div class="t" style="left:532.80px;top:328.90px;font:normal 8.85px/8.85px 'Liberation Sans', sans-serif;color:#111;transform:scaleX(0.8696);transform-origin:left 50%;">intabulare</div>
<div class="a" style="left:519.7px;top:272px;width:77.29999999999995px;height:1px;background:#9d9a94;"></div>
<div class="a" style="left:519.7px;top:273px;width:77.29999999999995px;height:1px;background:#fbfaf8;"></div>
<div class="a" style="left:519.7px;top:304.8px;width:77.29999999999995px;height:1.0px;background:#9d9a94;"></div>
<div class="a" style="left:519.7px;top:305.8px;width:77.29999999999995px;height:1.0px;background:#fbfaf8;"></div>
<div class="a" style="left:243px;top:351px;width:180px;height:48.69999999999999px;border:1px solid #a3a09a;border-radius:1px;box-sizing:border-box;box-shadow:inset 1px 1px 0 #f6f5f2, 1px 1px 0 #f6f5f2;"></div>
<div class="a" style="left:247.7px;top:348px;width:34.5px;height:6px;background:#d4d0c8;"></div>
<div class="t" style="left:249.70px;top:347.31px;font:bold 8.97px/8.97px 'Liberation Sans', sans-serif;color:#000;transform:scaleX(0.8696);transform-origin:left 50%;">STATUS</div>
<div class="t" style="right:362.20px;top:364.60px;font:normal 8.85px/8.85px 'Liberation Sans', sans-serif;color:#111;transform:scaleX(0.8696);transform-origin:right 50%;">Stare:</div>
<div class="a" style="left:284px;top:362px;width:86.30000000000001px;height:12px;background:#fff;border-top:1px solid #676561;border-left:1px solid #676561;border-right:1px solid #f2f1ee;border-bottom:1px solid #f2f1ee;box-sizing:border-box;box-shadow:inset 1px 1px 0 rgba(60,60,60,0.45);"></div>
<div class="a" style="left:359.3px;top:363px;width:10.0px;height:10px;background:#dcd9d3;border-top:1px solid #fbfaf8;border-left:1px solid #fbfaf8;border-right:1px solid #5a5955;border-bottom:1px solid #5a5955;box-sizing:border-box;box-shadow:inset -1px -1px 0 rgba(128,126,122,0.5);"></div>
<svg class="a" style="left:361.3px;top:366.2px" width="6" height="4"><path d="M0.3 0.4H5.7L3 3.4Z" fill="#000"/></svg>
<div class="t" style="left:286.70px;top:364.64px;font:normal 8.45px/8.45px 'Liberation Sans', sans-serif;color:#000;transform:scaleX(0.8696);transform-origin:left 50%;">la vanzare</div>
<div class="a" style="left:378px;top:365px;width:8px;height:8px;background:#fff;border-top:1px solid #4a4a4a;border-left:1px solid #4a4a4a;border-right:1px solid #f6f5f2;border-bottom:1px solid #f6f5f2;box-sizing:border-box;"></div>
<div class="t" style="left:390.00px;top:365.00px;font:normal 8.85px/8.85px 'Liberation Sans', sans-serif;color:#111;transform:scaleX(0.8696);transform-origin:left 50%;">internet</div>
<div class="t" style="left:247.70px;top:382.20px;font:normal 8.85px/8.85px 'Liberation Sans', sans-serif;color:#111;transform:scaleX(0.8696);transform-origin:left 50%;">Data I/A:</div>
<div class="a" style="left:283.6px;top:381px;width:45.799999999999955px;height:11.600000000000023px;background:#d4d0c8;border-top:1px solid #676561;border-left:1px solid #676561;border-right:1px solid #f2f1ee;border-bottom:1px solid #f2f1ee;box-sizing:border-box;box-shadow:inset 1px 1px 0 rgba(60,60,60,0.45);"></div>
<div class="t" style="left:286.30px;top:383.20px;font:bold 8.62px/8.62px 'Liberation Sans', sans-serif;color:#000;transform:scaleX(0.8696);transform-origin:left 50%;">15.06.2010</div>
<div class="t" style="left:334.50px;top:382.50px;font:normal 8.85px/8.85px 'Liberation Sans', sans-serif;color:#111;transform:scaleX(0.8696);transform-origin:left 50%;">/</div>
<div class="a" style="left:341.7px;top:381px;width:46.10000000000002px;height:11.600000000000023px;background:#d4d0c8;border-top:1px solid #676561;border-left:1px solid #676561;border-right:1px solid #f2f1ee;border-bottom:1px solid #f2f1ee;box-sizing:border-box;box-shadow:inset 1px 1px 0 rgba(60,60,60,0.45);"></div>
<div class="t" style="left:344.40px;top:383.20px;font:bold 8.62px/8.62px 'Liberation Sans', sans-serif;color:#000;transform:scaleX(0.8696);transform-origin:left 50%;">15.06.2010</div>
<div class="a" style="left:399px;top:380px;width:17px;height:14px;background:#d4d0c8;border-top:1px solid #f6f5f2;border-left:1px solid #f6f5f2;border-right:1px solid #555452;border-bottom:1px solid #555452;box-sizing:border-box;box-shadow:inset -1px -1px 0 rgba(128,126,122,0.6);"></div>
<div class="t" style="left:403.50px;top:383.10px;font:normal 8.74px/8.74px 'Liberation Sans', sans-serif;color:#222;transform:scaleX(0.8696);transform-origin:left 50%;">...</div>
<div class="a" style="left:426.6px;top:351px;width:179.0px;height:48.39999999999998px;border:1px solid #a3a09a;border-radius:1px;box-sizing:border-box;box-shadow:inset 1px 1px 0 #f6f5f2, 1px 1px 0 #f6f5f2;"></div>
<div class="a" style="left:431.75px;top:348px;width:24.0px;height:6px;background:#d4d0c8;"></div>
<div class="t" style="left:433.75px;top:347.60px;font:bold 8.62px/8.62px 'Liberation Sans', sans-serif;color:#000;transform:scaleX(0.8696);transform-origin:left 50%;">PRET</div>
<div class="t" style="left:436.90px;top:364.40px;font:bold 8.62px/8.62px 'Liberation Sans', sans-serif;color:#000;transform:scaleX(0.8696);transform-origin:left 50%;">PRET:</div>
<div class="a" style="left:466px;top:362.7px;width:85.29999999999995px;height:11.300000000000011px;background:#fff;border-top:1px solid #676561;border-left:1px solid #676561;border-right:1px solid #f2f1ee;border-bottom:1px solid #f2f1ee;box-sizing:border-box;box-shadow:inset 1px 1px 0 rgba(60,60,60,0.45);"></div>
<div class="a" style="left:556px;top:362.2px;width:40.60000000000002px;height:11.800000000000011px;background:#fff;border-top:1px solid #676561;border-left:1px solid #676561;border-right:1px solid #f2f1ee;border-bottom:1px solid #f2f1ee;box-sizing:border-box;box-shadow:inset 1px 1px 0 rgba(60,60,60,0.45);"></div>
<div class="a" style="left:585.6px;top:363.2px;width:10.0px;height:9.800000000000011px;background:#dcd9d3;border-top:1px solid #fbfaf8;border-left:1px solid #fbfaf8;border-right:1px solid #5a5955;border-bottom:1px solid #5a5955;box-sizing:border-box;box-shadow:inset -1px -1px 0 rgba(128,126,122,0.5);"></div>
<svg class="a" style="left:587.6px;top:366.3px" width="6" height="4"><path d="M0.3 0.4H5.7L3 3.4Z" fill="#000"/></svg>
<div class="t" style="left:558.70px;top:364.84px;font:normal 8.45px/8.45px 'Liberation Sans', sans-serif;color:#000;transform:scaleX(0.8696);transform-origin:left 50%;">EURO</div>
<div class="t" style="left:436.40px;top:382.20px;font:normal 8.85px/8.85px 'Liberation Sans', sans-serif;color:#444;transform:scaleX(0.8696);transform-origin:left 50%;">Agent:</div>
<div class="a" style="left:466px;top:381px;width:130.60000000000002px;height:12px;background:#d4d0c8;border-top:1px solid #676561;border-left:1px solid #676561;border-right:1px solid #f2f1ee;border-bottom:1px solid #f2f1ee;box-sizing:border-box;box-shadow:inset 1px 1px 0 rgba(60,60,60,0.45);"></div>
<div class="a" style="left:585.6px;top:382px;width:10.0px;height:10px;background:#dcd9d3;border-top:1px solid #fbfaf8;border-left:1px solid #fbfaf8;border-right:1px solid #5a5955;border-bottom:1px solid #5a5955;box-sizing:border-box;box-shadow:inset -1px -1px 0 rgba(128,126,122,0.5);"></div>
<svg class="a" style="left:587.6px;top:385.2px" width="6" height="4"><path d="M0.3 0.4H5.7L3 3.4Z" fill="#a9a6a0"/></svg>
<div class="t" style="left:468.70px;top:383.64px;font:normal 8.45px/8.45px 'Liberation Sans', sans-serif;color:#9c9993;transform:scaleX(0.8696);transform-origin:left 50%;">Sorin Bunica</div>
<div class="a" style="left:33.4px;top:405px;width:573.3000000000001px;height:1px;background:#8f8c86;"></div>
<div class="a" style="left:33.4px;top:406px;width:573.3000000000001px;height:1px;background:#fbfaf8;"></div>
<div class="a" style="left:34px;top:410px;width:99.6px;height:19.600000000000023px;background:#d4d0c8;border-top:1px solid #f6f5f2;border-left:1px solid #f6f5f2;border-right:1px solid #555452;border-bottom:1px solid #555452;box-sizing:border-box;box-shadow:inset -1px -1px 0 rgba(128,126,122,0.6);"></div>
<svg class="a" style="left:40.5px;top:413px" width="13" height="13"><defs><linearGradient id="fl" x1="0" y1="0" x2="1" y2="1"><stop offset="0" stop-color="#a4a4c8"/><stop offset="1" stop-color="#3e3e72"/></linearGradient></defs><rect x="0.3" y="0.3" width="12.2" height="12.4" rx="1.2" fill="url(#fl)"/><rect x="3.2" y="0.8" width="6.4" height="4.4" fill="#d6d6e4"/><rect x="7" y="1.6" width="1.3" height="2.6" fill="#5a5a86"/><rect x="2.3" y="6.6" width="8.2" height="5.6" fill="#f2f2f6"/></svg>
<div class="t" style="left:55.00px;top:416.20px;font:bold 8.85px/8.85px 'Liberation Sans', sans-serif;color:#000;transform:scaleX(0.8696);transform-origin:left 50%;">ADAUGA OFERTA</div>
<div class="a" style="left:140px;top:410px;width:98.69999999999999px;height:19.600000000000023px;background:#d4d0c8;border-top:1px solid #f6f5f2;border-left:1px solid #f6f5f2;border-right:1px solid #555452;border-bottom:1px solid #555452;box-sizing:border-box;box-shadow:inset -1px -1px 0 rgba(128,126,122,0.6);"></div>
<svg class="a" style="left:144px;top:413px" width="15" height="15"><path d="M4 1.5H11L13.5 4V14H4Z" fill="#dddbd6" stroke="#c4c1bb" stroke-width="0.6"/><rect x="0.8" y="0.8" width="8.5" height="3.6" rx="0.5" fill="#8f8c87"/><path d="M5.5 12C7.5 9 8.5 6 8 4.8S9.5 9.5 12.5 11" fill="none" stroke="#a8a5a0" stroke-width="0.8"/><rect x="8" y="11.5" width="5.2" height="2" fill="#b3b0aa"/></svg>
<div class="t" style="left:162.50px;top:416.20px;font:bold 8.85px/8.85px 'Liberation Sans', sans-serif;color:#94918b;transform:scaleX(0.8696);transform-origin:left 50%;text-shadow:0.8px 0.8px 0 #f4f3f0;">EXPORT AS PDF</div>
<div class="a" style="left:459.5px;top:410px;width:79.29999999999995px;height:19.600000000000023px;background:#d4d0c8;border-top:1px solid #f6f5f2;border-left:1px solid #f6f5f2;border-right:1px solid #555452;border-bottom:1px solid #555452;box-sizing:border-box;box-shadow:inset -1px -1px 0 rgba(128,126,122,0.6);"></div>
<svg class="a" style="left:465px;top:415px" width="14" height="11"><rect x="0.5" y="0.5" width="12.5" height="10" fill="#d9d7d2" stroke="#e8e6e1" stroke-width="0.8"/><rect x="1.3" y="1.3" width="11" height="8.4" fill="#9c9994"/><rect x="1.3" y="1.3" width="11" height="3" fill="#b8b5b0"/><path d="M1.3 9.7L5 5.5L8 7.5L12.3 4V9.7Z" fill="#7d7a75"/><circle cx="10.5" cy="2.6" r="0.9" fill="#e6e4e0"/></svg>
<div class="t" style="left:482.50px;top:416.20px;font:bold 8.85px/8.85px 'Liberation Sans', sans-serif;color:#94918b;transform:scaleX(0.8696);transform-origin:left 50%;text-shadow:0.8px 0.8px 0 #f4f3f0;">FOTOGRAFII</div>
<div class="a" style="left:545px;top:410px;width:62px;height:19.600000000000023px;background:#d4d0c8;border-top:1px solid #f6f5f2;border-left:1px solid #f6f5f2;border-right:1px solid #555452;border-bottom:1px solid #555452;box-sizing:border-box;box-shadow:inset -1px -1px 0 rgba(128,126,122,0.6);"></div>
<svg class="a" style="left:550.5px;top:413px" width="15" height="15"><circle cx="7" cy="7.2" r="5.5" fill="#dde5e2" stroke="#d00a0a" stroke-width="2.1"/><path d="M3.3 3.5L10.7 10.9" stroke="#d00a0a" stroke-width="2.1"/></svg>
<div class="t" style="left:568.00px;top:416.20px;font:bold 8.85px/8.85px 'Liberation Sans', sans-serif;color:#000;transform:scaleX(0.8696);transform-origin:left 50%;">CLOSE</div>
</body></html>
